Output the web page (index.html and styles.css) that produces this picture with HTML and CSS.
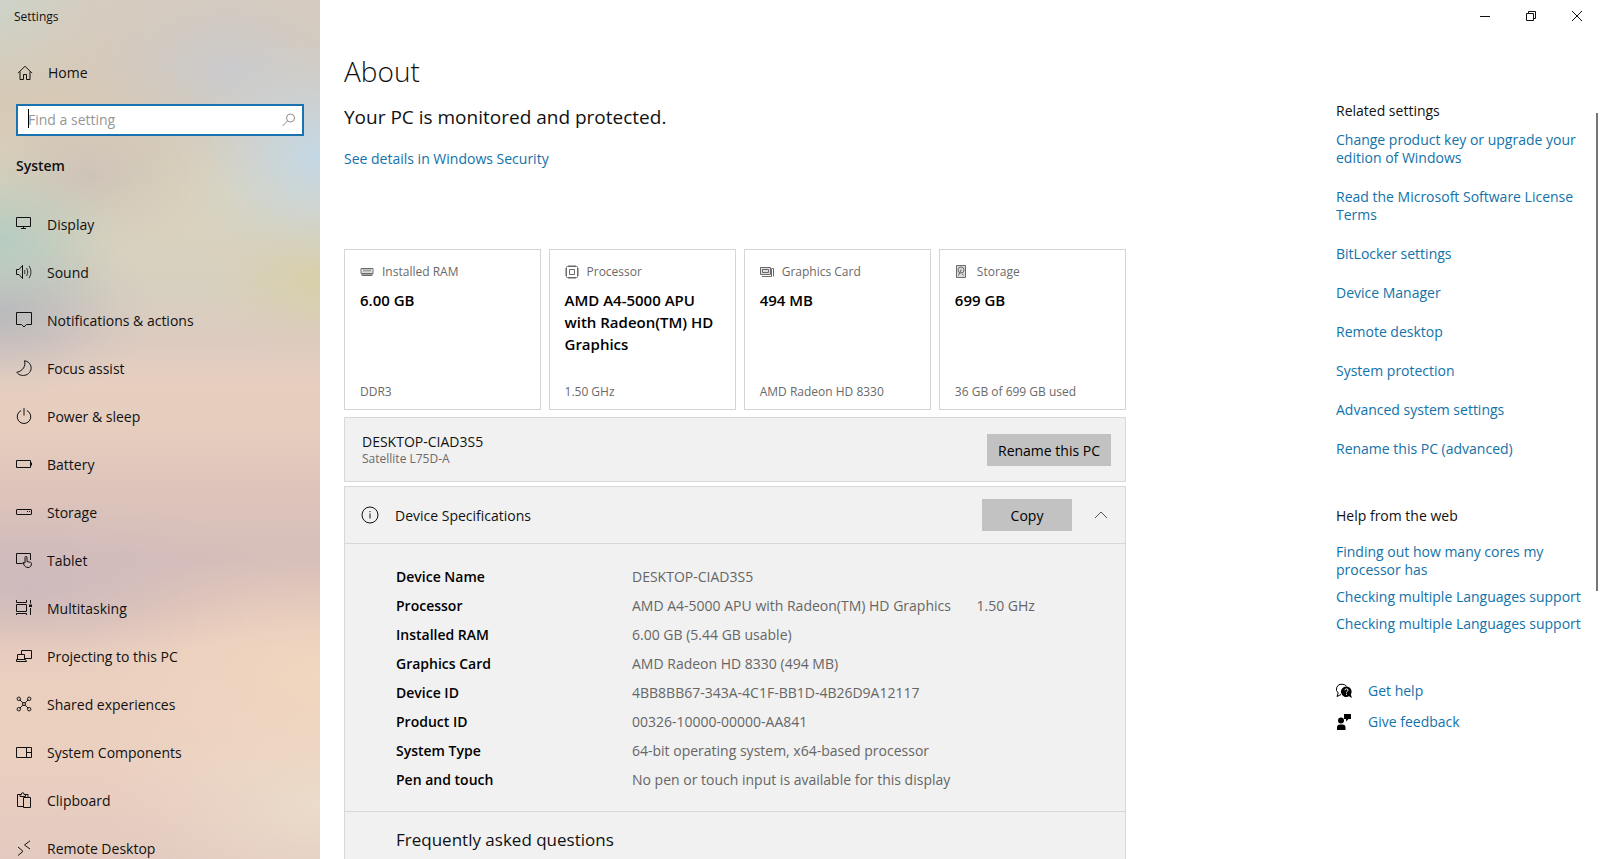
FILE: index.html
```
<!DOCTYPE html>
<html lang="en">
<head>
<meta charset="utf-8">
<title>Settings</title>
<link rel="stylesheet" href="styles.css">
</head>
<body>
<div class="window">
  <aside class="sidebar">
    <div class="app-title">Settings</div>
    <div class="sidebar-body">
      <a class="nav-link home" href="#home">
        <svg class="icon" viewBox="0 0 16 16"><path d="M1 8.2 8 1.2l7 7M3 6.5v8h3.5v-5h3v5H13v-8"/></svg>
        Home
      </a>
      <div class="search">
        <input class="search-input" type="text" placeholder="Find a setting" aria-label="Find a setting">
        <span class="caret"></span>
        <svg class="search-icon" viewBox="0 0 16 16"><circle cx="9.500" cy="5" r="4"/><path d="M6.500 8 1.500 13"/></svg>
      </div>
      <h2 class="section-title">System</h2>
      <nav class="nav">
        <a class="nav-link" href="#display"><svg class="icon" viewBox="0 0 16 16"><path d="M.5 1.500h14v9H.5zM7.500 10.500v2M5 12.500h5"/></svg>Display</a>
        <a class="nav-link" href="#sound"><svg class="icon" viewBox="0 0 16 16"><path d="M.5 5.500H3l3.500-4v13L3 10.500H.5z"/><path class="thin" d="M8.500 6q1 2 0 4M10.700 4q2.300 4 0 8M13 1.800q4 6.200 0 12.400"/></svg>Sound</a>
        <a class="nav-link" href="#notifications"><svg class="icon" viewBox="0 0 16 16"><path d="M.5.5h15v12h-5L8 15l-2.500-2.500h-5z"/></svg>Notifications &amp; actions</a>
        <a class="nav-link" href="#focus"><svg class="icon" viewBox="0 0 16 16"><path d="M8.500.8C10 6 7 11 .8 12.300 3 15.500 7 16 10 15c4-1.500 6-5.500 4.800-9.200C13.800 2.800 11.500 1.200 8.500.8z"/></svg>Focus assist</a>
        <a class="nav-link" href="#power"><svg class="icon" viewBox="0 0 16 16"><path d="M5.200 2.500a6.800 6.800 0 1 0 5.600 0M8 0v7.500"/></svg>Power &amp; sleep</a>
        <a class="nav-link" href="#battery"><svg class="icon" viewBox="0 0 16 16"><path d="M.5 4.500h14v7H.5zM15.500 6.500v3"/></svg>Battery</a>
        <a class="nav-link" href="#storage"><svg class="icon" viewBox="0 0 16 16"><rect x=".5" y="5.500" width="15" height="5" rx=".5"/><path d="M11 7.500h1M13 7.500h1"/></svg>Storage</a>
        <a class="nav-link" href="#tablet"><svg class="icon" viewBox="0 0 16 16"><path d="M6.500 11.500h-6v-10h14V8"/><path d="M9 11V5.500q0-1 1-1t1 1v4l3.500.8q1 .3 1 1.300c0 2-1 3.900-3.500 3.900-2 0-3-1-4-2.500L7 10.500z"/></svg>Tablet</a>
        <a class="nav-link" href="#multitasking"><svg class="icon" viewBox="0 0 16 16"><path d="M.5 0v2.500h10V0M.5 4.500h10v7H.5zM.5 15v-1.500h10V15M14.500 0v3.500M14.500 8v7"/><path class="solid" d="M13 4.500h3v2.500h-3z"/></svg>Multitasking</a>
        <a class="nav-link" href="#projecting"><svg class="icon" viewBox="0 0 16 16"><path d="M5.500 6V2.500h10v8H9M1.500 11V6.500h7V11M.5 13.500v-2h9l1 2z"/></svg>Projecting to this PC</a>
        <a class="nav-link" href="#shared"><svg class="icon" viewBox="0 0 16 16"><circle cx="2.800" cy="2.800" r="1.700"/><circle cx="13.200" cy="2.800" r="1.700"/><circle cx="2.800" cy="13.200" r="1.700"/><circle cx="13.200" cy="13.200" r="1.700"/><path d="m4 4 2.800 2.800M12 4 9.200 6.800M4 12l2.800-2.800M12 12 9.200 9.200"/><circle cx="8" cy="8" r="1.500"/></svg>Shared experiences</a>
        <a class="nav-link" href="#components"><svg class="icon" viewBox="0 0 16 16"><path d="M.5 3.500h15v10H.5zM10.500 3.500v10M10.500 8.500h5"/></svg>System Components</a>
        <a class="nav-link" href="#clipboard"><svg class="icon" viewBox="0 0 16 16"><path d="M7 14.500H1.500v-12H4M9.500 2.500h2.500V5M4 4.500v-2h1.500q0-2 1.200-2t1.300 2h1.500v2zM7.500 5.500h7v10h-7z"/></svg>Clipboard</a>
        <a class="nav-link" href="#remote"><svg class="icon" viewBox="0 0 16 16"><path d="m2 7 5 4.300-5 4.200M14 .8 8.500 5l5.500 4"/></svg>Remote Desktop</a>
      </nav>
    </div>
  </aside>

  <main class="main">
    <div class="window-controls">
      <button class="window-button" aria-label="Minimize"><svg viewBox="0 0 12 12"><path d="M1 6.500h10"/></svg></button>
      <button class="window-button" aria-label="Restore"><svg viewBox="0 0 12 12"><path d="M1.500 3.500h7v7h-7zM3.500 3.500v-2h7v7h-2"/></svg></button>
      <button class="window-button" aria-label="Close"><svg viewBox="0 0 12 12"><path d="m1 1 10 10M11 1 1 11"/></svg></button>
    </div>

    <div class="columns">
      <div class="content">
        <h1 class="page-title">About</h1>
        <p class="status">Your PC is monitored and protected.</p>
        <a class="link" href="#security">See details in Windows Security</a>

        <div class="cards">
          <section class="card">
            <h3 class="card-label"><svg class="card-icon" viewBox="0 0 14 14"><path class="tint" d="M1.500 3.500h11v7h-11z"/><path d="M1 3.500h12v5H1zM2 8.500v2h10v-2M4 4.500v2M6 4.500v2M8 4.500v2M10 4.500v2M4 9v1.500M6 9v1.500M8 9v1.500M10 9v1.500"/></svg>Installed RAM</h3>
            <p class="card-value">6.00 GB</p>
            <p class="card-note">DDR3</p>
          </section>
          <section class="card">
            <h3 class="card-label"><svg class="card-icon" viewBox="0 0 14 14"><rect x="1.500" y="1.500" width="11" height="11" rx="1"/><path d="M4.500 4.500h5v5h-5z"/><path class="pins" d="M3.500.5h7M3.500 13.500h7M.5 3.500v7M13.500 3.500v7"/></svg>Processor</h3>
            <p class="card-value">AMD A4-5000 APU with Radeon(TM) HD Graphics</p>
            <p class="card-note">1.50 GHz</p>
          </section>
          <section class="card">
            <h3 class="card-label"><svg class="card-icon" viewBox="0 0 14 14"><path class="tint" d="M.5 2.500h10v7H.5z"/><path d="M.5 2.500h10v7H.5zM2.500 4.500h6v3h-6zM12 3.500h1.500v8M2 11.500h9.500v-8"/></svg>Graphics Card</h3>
            <p class="card-value">494 MB</p>
            <p class="card-note">AMD Radeon HD 8330</p>
          </section>
          <section class="card">
            <h3 class="card-label"><svg class="card-icon" viewBox="0 0 14 14"><path class="tint" d="M1.500.5h9v12h-9z"/><path d="M1.500.5h9v12h-9z"/><circle cx="6" cy="5" r="3"/><path d="M6 5 3.500 10.500M7 8.500l1.500 2M5.500 5h1"/></svg>Storage</h3>
            <p class="card-value">699 GB</p>
            <p class="card-note">36 GB of 699 GB used</p>
          </section>
        </div>

        <section class="panel device">
          <div>
            <div class="device-name">DESKTOP-CIAD3S5</div>
            <div class="device-model">Satellite L75D-A</div>
          </div>
          <button class="button">Rename this PC</button>
        </section>

        <section class="panel specs">
          <header class="specs-header">
            <svg class="info-icon" viewBox="0 0 18 18"><circle cx="9" cy="9" r="8"/><path d="M9 7.500v5M9 5v1.200"/></svg>
            <h2 class="specs-title">Device Specifications</h2>
            <button class="button">Copy</button>
            <button class="collapse" aria-label="Collapse"><svg viewBox="0 0 14 8"><path d="M1 7 7 1l6 6"/></svg></button>
          </header>
          <table class="specs-table">
            <tr><th scope="row">Device Name</th><td>DESKTOP-CIAD3S5</td></tr>
            <tr><th scope="row">Processor</th><td>AMD A4-5000 APU with Radeon(TM) HD Graphics <span class="clock">1.50 GHz</span></td></tr>
            <tr><th scope="row">Installed RAM</th><td>6.00 GB (5.44 GB usable)</td></tr>
            <tr><th scope="row">Graphics Card</th><td>AMD Radeon HD 8330 (494 MB)</td></tr>
            <tr><th scope="row">Device ID</th><td>4BB8BB67-343A-4C1F-BB1D-4B26D9A12117</td></tr>
            <tr><th scope="row">Product ID</th><td>00326-10000-00000-AA841</td></tr>
            <tr><th scope="row">System Type</th><td>64-bit operating system, x64-based processor</td></tr>
            <tr><th scope="row">Pen and touch</th><td>No pen or touch input is available for this display</td></tr>
          </table>
          <h2 class="faq-title">Frequently asked questions</h2>
        </section>
      </div>

      <aside class="related">
        <h2 class="related-title">Related settings</h2>
        <ul class="related-list">
          <li><a class="link" href="#key">Change product key or upgrade your edition of Windows</a></li>
          <li><a class="link" href="#license">Read the Microsoft Software License Terms</a></li>
          <li><a class="link" href="#bitlocker">BitLocker settings</a></li>
          <li><a class="link" href="#devices">Device Manager</a></li>
          <li><a class="link" href="#remote-desktop">Remote desktop</a></li>
          <li><a class="link" href="#protection">System protection</a></li>
          <li><a class="link" href="#advanced">Advanced system settings</a></li>
          <li><a class="link" href="#rename">Rename this PC (advanced)</a></li>
        </ul>
        <h2 class="related-title">Help from the web</h2>
        <ul class="help-list">
          <li><a class="link" href="#cores">Finding out how many cores my processor has</a></li>
          <li><a class="link" href="#languages">Checking multiple Languages support</a></li>
          <li><a class="link" href="#languages-2">Checking multiple Languages support</a></li>
        </ul>
        <div class="support">
          <a class="link support-link" href="#help"><svg class="support-icon" viewBox="0 0 16 16"><path d="M5 11.500 1 13.500l1.200-3.500A5 5 0 0 1 6 1.200q3 0 4.500 2"/><path class="solid" d="M10.500 3.500a5.300 5.300 0 1 0 2.500 9.800l3 1.700-1.200-3.400a5.300 5.300 0 0 0-4.300-8.100z"/><path class="mark" d="M9 7.300q0-1.500 1.500-1.500T12 7.200q0 .8-.8 1.200t-.7 1.300M10.500 10.700v1.100"/></svg>Get help</a>
          <a class="link support-link" href="#feedback"><svg class="support-icon" viewBox="0 0 16 16"><circle class="solid" cx="5" cy="6.500" r="3"/><path class="solid" d="M1 16v-2.500Q1 10.500 4 10.500h2.500q3 0 3 3V16zM8 0h7v5h-2.500L10 7.500V5H8z"/></svg>Give feedback</a>
        </div>
      </aside>
    </div>
    <div class="scroll-thumb"></div>
  </main>
</div>
</body>
</html>
```
FILE: styles.css
```
* { box-sizing: border-box; }

body {
  margin: 0;
  background: #fff;
  color: #111;
  font: 14px/18px "Open Sans", "Noto Sans", sans-serif;
}

h1, h2, h3, p, ul { margin: 0; padding: 0; font-weight: 400; }
ul { list-style: none; }
a { color: inherit; text-decoration: none; }
button { border: 0; padding: 0; background: none; color: inherit; font: inherit; }
svg { display: block; flex: none; fill: none; stroke: currentColor; stroke-width: 1; }
.solid { fill: currentColor; stroke: none; }

.window {
  display: grid;
  grid-template-columns: 320px minmax(0, 1fr);
  height: 100vh;
  overflow: hidden;
}

/* Sidebar */
.sidebar {
  padding-top: 8px;
  overflow: hidden;
  background:
    radial-gradient(ellipse 150px 120px at 320px 155px, #c4d8e6 0, #c4d8e699 35%, #c4d8e622 75%, #c4d8e600 100%),
    radial-gradient(ellipse 170px 100px at 230px 70px, #cbcbcd 0, #cbcbcd88 35%, #cbcbcd22 75%, #cbcbcd00 100%),
    radial-gradient(ellipse 130px 90px at 0 240px, #b5ccc0 0, #b5ccc099 35%, #b5ccc022 75%, #b5ccc000 100%),
    radial-gradient(ellipse 160px 90px at 0 310px, #b9b8bc 0, #b9b8bc99 35%, #b9b8bc22 75%, #b9b8bc00 100%),
    radial-gradient(ellipse 120px 80px at 320px 280px, #d8cfa8 0, #d8cfa888 35%, #d8cfa822 75%, #d8cfa800 100%),
    radial-gradient(ellipse 120px 110px at 0 0, #cdd3c8 0, #cdd3c888 35%, #cdd3c822 75%, #cdd3c800 100%),
    radial-gradient(ellipse 140px 80px at 90px 175px, #cec3b8 0, #cec3b888 35%, #cec3b822 75%, #cec3b800 100%),
    radial-gradient(ellipse 240px 140px at 320px 680px, #f1d7bf 0, #f1d7bf88 35%, #f1d7bf22 75%, #f1d7bf00 100%),
    radial-gradient(ellipse 220px 140px at 320px 800px, #ebdccb 0, #ebdccb88 35%, #ebdccb22 75%, #ebdccb00 100%),
    radial-gradient(ellipse 240px 90px at 30px 585px, #cebabd 0, #cebabd88 35%, #cebabd22 75%, #cebabd00 100%),
    linear-gradient(#d6cbbf 0, #d7c9b5 100px, #dad3bd 190px, #d7d0c0 290px, #ddcbc0 340px, #e7cfc0 385px, #e6cdbe 430px, #dec5bb 490px, #d5bdba 560px, #dec4ba 605px, #eacfbf 650px, #ebd0c0 760px, #e3cac0 859px);
}

.app-title { padding: 0 14px 32px; font-size: 12px; line-height: 18px; }
.sidebar-body { padding: 0 16px; }

.nav-link {
  display: flex;
  align-items: center;
  gap: 15px;
  height: 48px;
}

.home { height: 30px; padding-left: 1px; }
.icon { width: 16px; height: 16px; }
.nav .icon { margin-bottom: 2px; }
.thin { opacity: .8; }

.search { position: relative; margin-top: 16px; }

.search-input {
  display: block;
  width: 100%;
  height: 32px;
  border: 2px solid #1a72b0;
  border-radius: 0;
  padding: 0 32px 2px 10px;
  outline: 0;
  background: #fff;
  color: #111;
  font: inherit;
}

.search-input::placeholder { color: #969696; opacity: 1; }

.caret { position: absolute; top: 5px; left: 12px; width: 1px; height: 19px; background: #000; }
.search-icon { position: absolute; top: 9px; right: 7px; width: 16px; height: 16px; color: #8c8c8c; }

.section-title { padding: 20px 0 25px; font-size: 14px; font-weight: 600; line-height: 20px; }

/* Main area */
.main { position: relative; display: flex; flex-direction: column; min-width: 0; }

.window-controls { display: flex; justify-content: flex-end; height: 32px; }
.window-button { display: grid; place-items: center; width: 46px; }
.window-button svg { width: 12px; height: 12px; }

.columns {
  display: flex;
  flex: 1;
  justify-content: space-between;
  gap: 24px;
  min-height: 0;
  padding: 0 16px 0 24px;
}

.content { display: flex; flex: 0 1 782px; flex-direction: column; min-width: 0; padding-top: 19px; }

.page-title { font-size: 28px; font-weight: 300; line-height: 40px; }
.status { padding: 13px 0 20px; font-size: 19px; line-height: 26px; }
.link { color: #1272a9; }

.cards {
  display: grid;
  grid-template-columns: 21fr 20fr 20fr 20fr;
  gap: 8px;
  margin: 81px 0 7px;
}

.card {
  display: flex;
  flex-direction: column;
  height: 161px;
  padding: 13px 15px 8px;
  border: 1px solid #d4d4d4;
}

.card-label { display: flex; align-items: center; gap: 8px; color: #6a6a6a; font-size: 12px; line-height: 18px; }
.card-icon { width: 14px; height: 14px; }
.tint { fill: #dcdcdc; stroke: none; }
.pins { stroke-dasharray: 1; }
.card-value { padding-top: 8px; color: #000; font-size: 15px; font-weight: 600; line-height: 22px; }
.card-note { margin-top: auto; color: #6a6a6a; font-size: 12px; line-height: 18px; }

.panel { border: 1px solid #d8d8d8; background: #f1f1f1; }

.device {
  display: flex;
  align-items: center;
  justify-content: space-between;
  margin-bottom: 4px;
  padding: 15px 14px 14px 17px;
}

.device-name { line-height: 18px; }
.device-model { color: #6a6a6a; font-size: 12px; line-height: 16px; }

.button { min-width: 90px; height: 32px; padding: 1px 11px 0; background: #c2c2c2; color: #000; }

.specs { flex: 1; }

.specs-header {
  display: flex;
  align-items: center;
  height: 57px;
  padding: 0 17px 0 16px;
  border-bottom: 1px solid #d8d8d8;
}

.info-icon { width: 18px; height: 18px; margin-right: 16px; }
.specs-title { flex: 1; padding-top: 2px; font-size: 14px; }
.collapse { margin-left: 22px; color: #555; }
.collapse svg { width: 14px; height: 8px; }

.specs-table { width: 100%; margin: 18px 0 17px; border-spacing: 0; }
.specs-table th, .specs-table td { height: 29px; padding: 0; text-align: left; }
.specs-table th { width: 287px; padding-left: 51px; color: #000; font-weight: 600; }
.specs-table td { color: #666; }
.clock { margin-left: 22px; }

.faq-title { padding: 15px 51px; border-top: 1px solid #d8d8d8; font-size: 17px; line-height: 26px; }

/* Related settings */
.related { flex: 0 0 248px; padding-top: 70px; }
.related-title { font-size: 14px; line-height: 18px; }
.related-list { display: grid; gap: 21px; padding: 11px 0 49px; }
.help-list { display: grid; gap: 9px; padding: 18px 0 49px; }
.support { display: grid; gap: 13px; }
.support-link { display: flex; align-items: center; gap: 16px; }
.support-icon { width: 16px; height: 16px; color: #000; }
.mark { stroke: #fff; }

.scroll-thumb { position: absolute; top: 13%; right: 2px; width: 2px; height: 55%; background: #767676; }
```
